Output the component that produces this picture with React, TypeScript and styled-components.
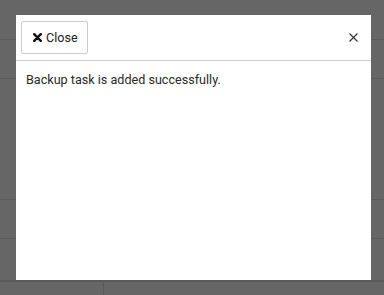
import styled, { createGlobalStyle } from "styled-components";

const GlobalStyle = createGlobalStyle`
  html, body {
    margin: 0;
    padding: 0;
    background: #666666;
    font-family: Roboto, "Liberation Sans", Arial, sans-serif;
  }
`;

const Page = styled.div`
  position: relative;
  width: 384px;
  height: 295px;
  overflow: hidden;
  background: #666666;
`;

// content behind the modal overlay
const Backdrop = styled.div`
  display: flex;
  flex-direction: column;
`;

interface RowProps {
  h: number;
}

const Row = styled.div<RowProps>`
  height: ${(p) => p.h}px;
  border-bottom: 1px solid #5a5a5a;
  box-sizing: border-box;
`;

const Footer = styled.div`
  display: flex;
  height: 20px;
  border-top: 1px solid #5a5a5a;
`;

const FooterCell = styled.div`
  width: 103px;
  border-right: 1px solid #5a5a5a;
`;

const Dialog = styled.div`
  position: absolute;
  left: 16px;
  top: 15px;
  width: 355px;
  height: 265px;
  background: #ffffff;
  display: flex;
  flex-direction: column;
`;

const Header = styled.div`
  display: flex;
  align-items: center;
  justify-content: space-between;
  height: 46px;
  padding: 0 13px 0 5px;
  border-bottom: 1px solid #cccccc;
  box-sizing: border-box;
`;

const Button = styled.button`
  display: flex;
  align-items: center;
  gap: 4px;
  height: 33px;
  width: 67px;
  padding: 0 0 0 11px;
  background: #ffffff;
  border: 1px solid #cccccc;
  border-radius: 2px;
  font-family: Roboto, "Liberation Sans", Arial, sans-serif;
  font-size: 12.6px;
  color: #222222;
  box-sizing: border-box;
  cursor: pointer;
`;

const Icon = styled.span`
  display: flex;
`;

const Body = styled.div`
  padding: 11px 10px;
  font-size: 12.6px;
  color: #2a2a2a;
`;

function App() {
  return (
    <Page>
      <GlobalStyle />
      <Backdrop>
        <Row h={40} />
        <Row h={39} />
        <Row h={121} />
        <Row h={39} />
        <Row h={42} />
        <Footer>
          <FooterCell />
        </Footer>
      </Backdrop>
      <Dialog>
        <Header>
          <Button>
            <Icon>
              <svg width="9" height="9" viewBox="0 0 9 9">
                <path d="M1.2 1.2 L7.8 7.8 M7.8 1.2 L1.2 7.8" stroke="#111" strokeWidth="2.4" strokeLinecap="round" />
              </svg>
            </Icon>
            Close
          </Button>
          <Icon>
            <svg width="9" height="9" viewBox="0 0 9 9">
              <path d="M0.5 0.5 L8.5 8.5 M8.5 0.5 L0.5 8.5" stroke="#333" strokeWidth="1.1" />
            </svg>
          </Icon>
        </Header>
        <Body>Backup task is added successfully.</Body>
      </Dialog>
    </Page>
  );
}

export default App;
